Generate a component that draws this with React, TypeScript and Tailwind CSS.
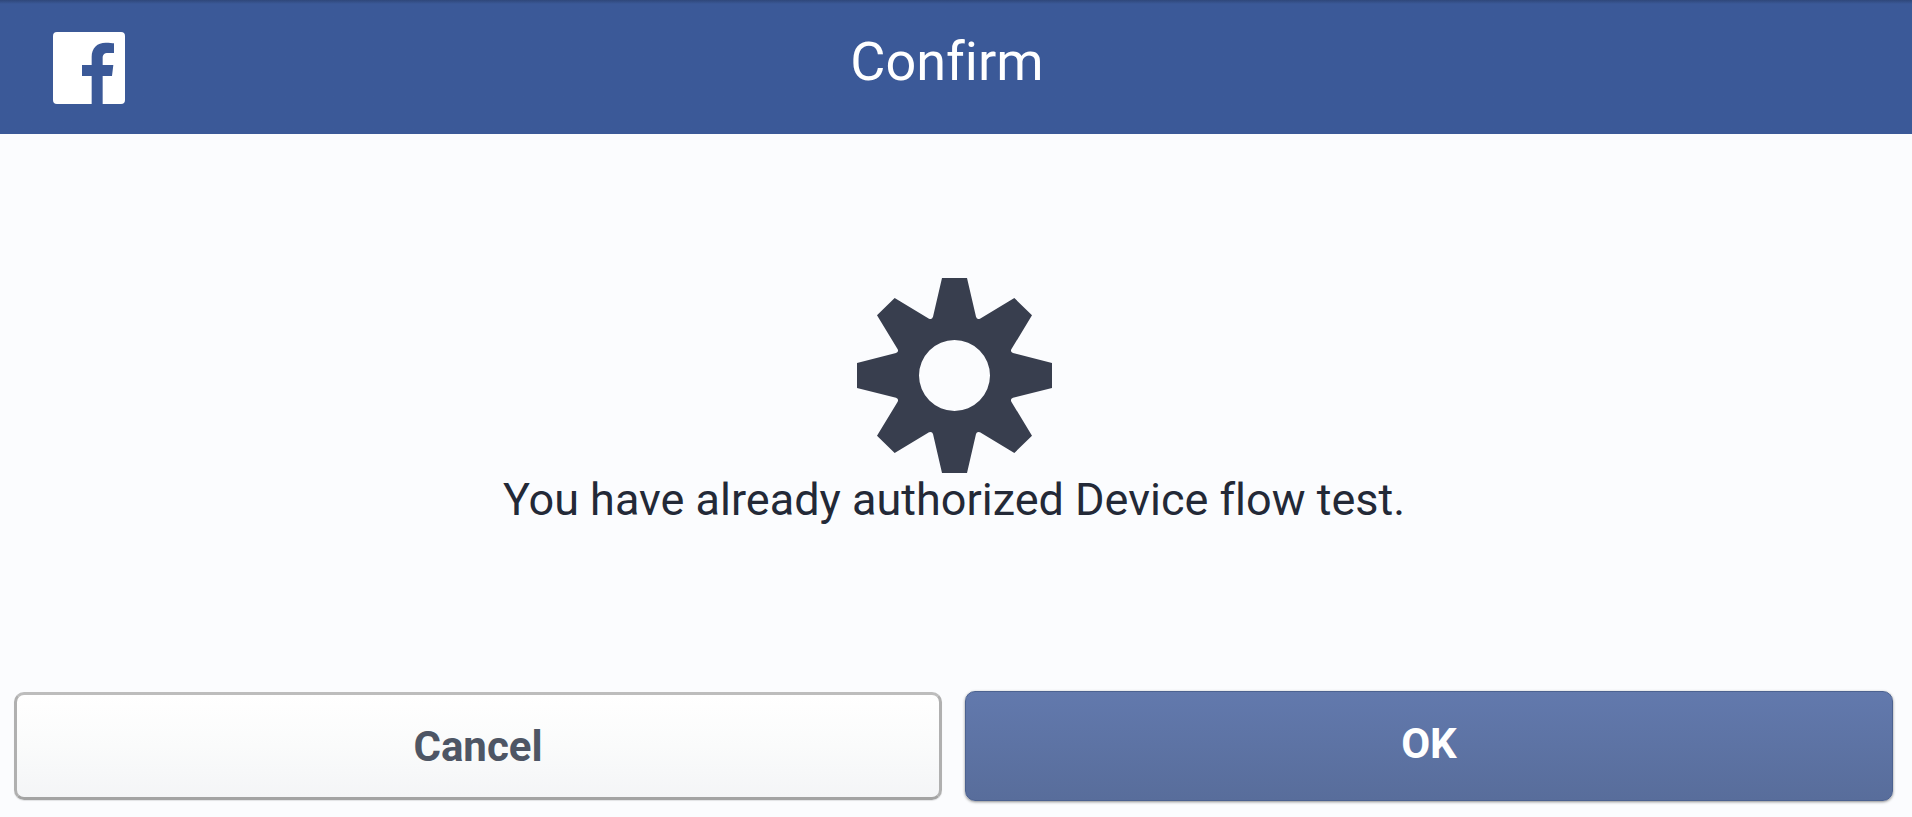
import type { ReactNode } from "react";

function FacebookLogo() {
  return (
    <svg viewBox="0 0 216 216" className="size-[72px]" role="img" aria-label="Facebook">
      <path
        fill="#ffffff"
        d="M12 0H204Q216 0 216 12V204Q216 216 204 216H149V132H177L181 99H149V79C149 69 152 63 166 63H183V34C179 33 169 32 158 32C133 32 116 47 116 75V99H87V132H116V216H12Q0 216 0 204V12Q0 0 12 0Z"
      />
    </svg>
  );
}

function GearIcon() {
  return (
    <svg viewBox="0 0 585 585" className="size-[195px]" aria-hidden="true">
      <path
        fill="#383e4e"
        fillRule="evenodd"
        d="M255 0H330L357 116Q360 126 369 122L472 60L525 112L463 214Q459 222 468 225L585 255V330L468 359Q459 362 463 371L525 473L472 525L369 463Q360 459 357 468L330 585H255L228 468Q225 459 216 463L113 525L60 473L122 371Q126 362 117 359L0 330V255L117 225Q126 222 122 214L60 112L113 60L216 122Q225 126 228 116ZM292.5 186A106.5 106.5 0 1 0 292.5 399A106.5 106.5 0 1 0 292.5 186Z"
      />
    </svg>
  );
}

interface DialogButtonProps {
  primary?: boolean;
  children: ReactNode;
}

function DialogButton({ primary, children }: DialogButtonProps) {
  if (primary) {
    return (
      <button
        type="button"
        className="h-[110px] rounded-[10px] border border-[#4c6290] bg-linear-to-b from-[#6279ad] to-[#586d9b] pb-1.5 text-[42px] font-bold text-white shadow-[0_1px_3px_rgba(0,0,0,0.45)]"
      >
        {children}
      </button>
    );
  }
  return (
    <button
      type="button"
      className="h-[108px] rounded-[10px] border-3 border-t-[#bdbdbd] border-r-[#b0b0b0] border-b-[#a3a3a3] border-l-[#b0b0b0] bg-linear-to-b from-white via-[#fafbfb] to-[#f4f5f7] text-[42px] font-bold text-[#4e5665] shadow-[0_1px_1px_rgba(0,0,0,0.1)]"
    >
      {children}
    </button>
  );
}

export default function App() {
  return (
    <div className="flex min-h-screen flex-col bg-[#fbfcfe] font-['Roboto',sans-serif] [font-variant-ligatures:none]">
      <header className="grid h-[134px] grid-cols-[1fr_auto_1fr] items-center bg-[#3b5998] bg-linear-to-b from-[#2f477a] to-[#3b5998] to-[4px] pt-0.5 pr-[18px]">
        <div className="pl-[53px]">
          <FacebookLogo />
        </div>
        <h1 className="pb-3 text-[54px] leading-16 text-white">Confirm</h1>
      </header>

      <main className="flex flex-1 flex-col items-center pt-36 pr-1">
        <GearIcon />
        <p className="text-[45px] leading-[54px] text-[#232937]">You have already authorized Device flow test.</p>
      </main>

      <footer className="grid grid-cols-2 items-center gap-[23px] pr-[19px] pb-4 pl-3.5">
        <DialogButton>Cancel</DialogButton>
        <DialogButton primary>OK</DialogButton>
      </footer>
    </div>
  );
}
